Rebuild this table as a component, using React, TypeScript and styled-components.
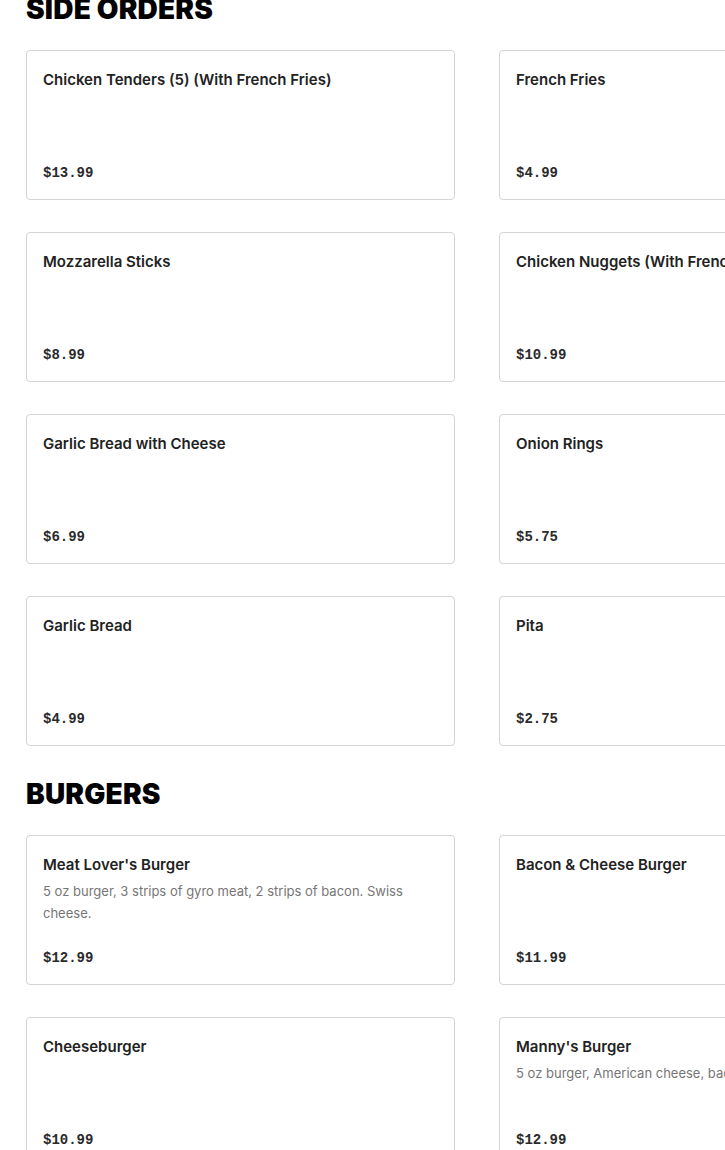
import React from 'react';
import styled, { createGlobalStyle } from 'styled-components';

const GlobalStyle = createGlobalStyle`
  html, body {
    margin: 0;
    padding: 0;
    background: #fff;
    overflow-x: hidden;
  }
`;

interface MenuItem {
  name: string;
  price: string;
  description?: string;
}

interface MenuSection {
  title: string;
  items: MenuItem[];
}

const sections: MenuSection[] = [
  {
    title: 'SIDE ORDERS',
    items: [
      { name: 'Chicken Tenders (5) (With French Fries)', price: '$13.99' },
      { name: 'French Fries', price: '$4.99' },
      { name: 'Mozzarella Sticks', price: '$8.99' },
      { name: 'Chicken Nuggets (With French Fries)', price: '$10.99' },
      { name: 'Garlic Bread with Cheese', price: '$6.99' },
      { name: 'Onion Rings', price: '$5.75' },
      { name: 'Garlic Bread', price: '$4.99' },
      { name: 'Pita', price: '$2.75' },
    ],
  },
  {
    title: 'BURGERS',
    items: [
      {
        name: "Meat Lover's Burger",
        description: '5 oz burger, 3 strips of gyro meat, 2 strips of bacon. Swiss cheese.',
        price: '$12.99',
      },
      { name: 'Bacon & Cheese Burger', price: '$11.99' },
      { name: 'Cheeseburger', price: '$10.99' },
      {
        name: "Manny's Burger",
        description: '5 oz burger, American cheese, bacon, lettuce, tomato, onion.',
        price: '$12.99',
      },
    ],
  },
];

const Page = styled.div`
  padding: 0 0 0 26px;
  margin-top: -8px;
  font-family: 'Inter', 'Liberation Sans', sans-serif;
  color: #191919;
`;

const Section = styled.section`
  margin-bottom: 31px;
`;

const Heading = styled.h2`
  margin: 0 0 24px;
  font-family: 'Inter', 'Liberation Sans', sans-serif;
  font-size: 28px;
  line-height: 34px;
  font-weight: 900;
  letter-spacing: 0.2px;
  color: #000;
`;

const Grid = styled.div`
  display: grid;
  grid-template-columns: 429px 429px;
  column-gap: 44px;
  row-gap: 32px;
`;

const Card = styled.div`
  box-sizing: border-box;
  height: 150px;
  padding: 17px 16px 14px;
  border: 1px solid #d4d4d4;
  border-radius: 4px;
  background: #fff;
  display: flex;
  flex-direction: column;
  overflow: hidden;
`;

const Name = styled.div`
  font-size: 15px;
  line-height: 24px;
  font-weight: 600;
  color: #222;
  white-space: nowrap;
`;

const Description = styled.div`
  margin-top: 3px;
  font-size: 13px;
  line-height: 22px;
  color: #767676;
`;

const Price = styled.div`
  margin-top: auto;
  font-family: 'Liberation Mono', 'DejaVu Sans Mono', monospace;
  font-size: 14px;
  line-height: 24px;
  font-weight: 700;
  color: #2a2a2a;
`;

export default function App() {
  return (
    <>
      <GlobalStyle />
      <Page>
        {sections.map((section) => (
          <Section key={section.title}>
            <Heading>{section.title}</Heading>
            <Grid>
              {section.items.map((item) => (
                <Card key={item.name}>
                  <Name>{item.name}</Name>
                  {item.description && <Description>{item.description}</Description>}
                  <Price>{item.price}</Price>
                </Card>
              ))}
            </Grid>
          </Section>
        ))}
      </Page>
    </>
  );
}
